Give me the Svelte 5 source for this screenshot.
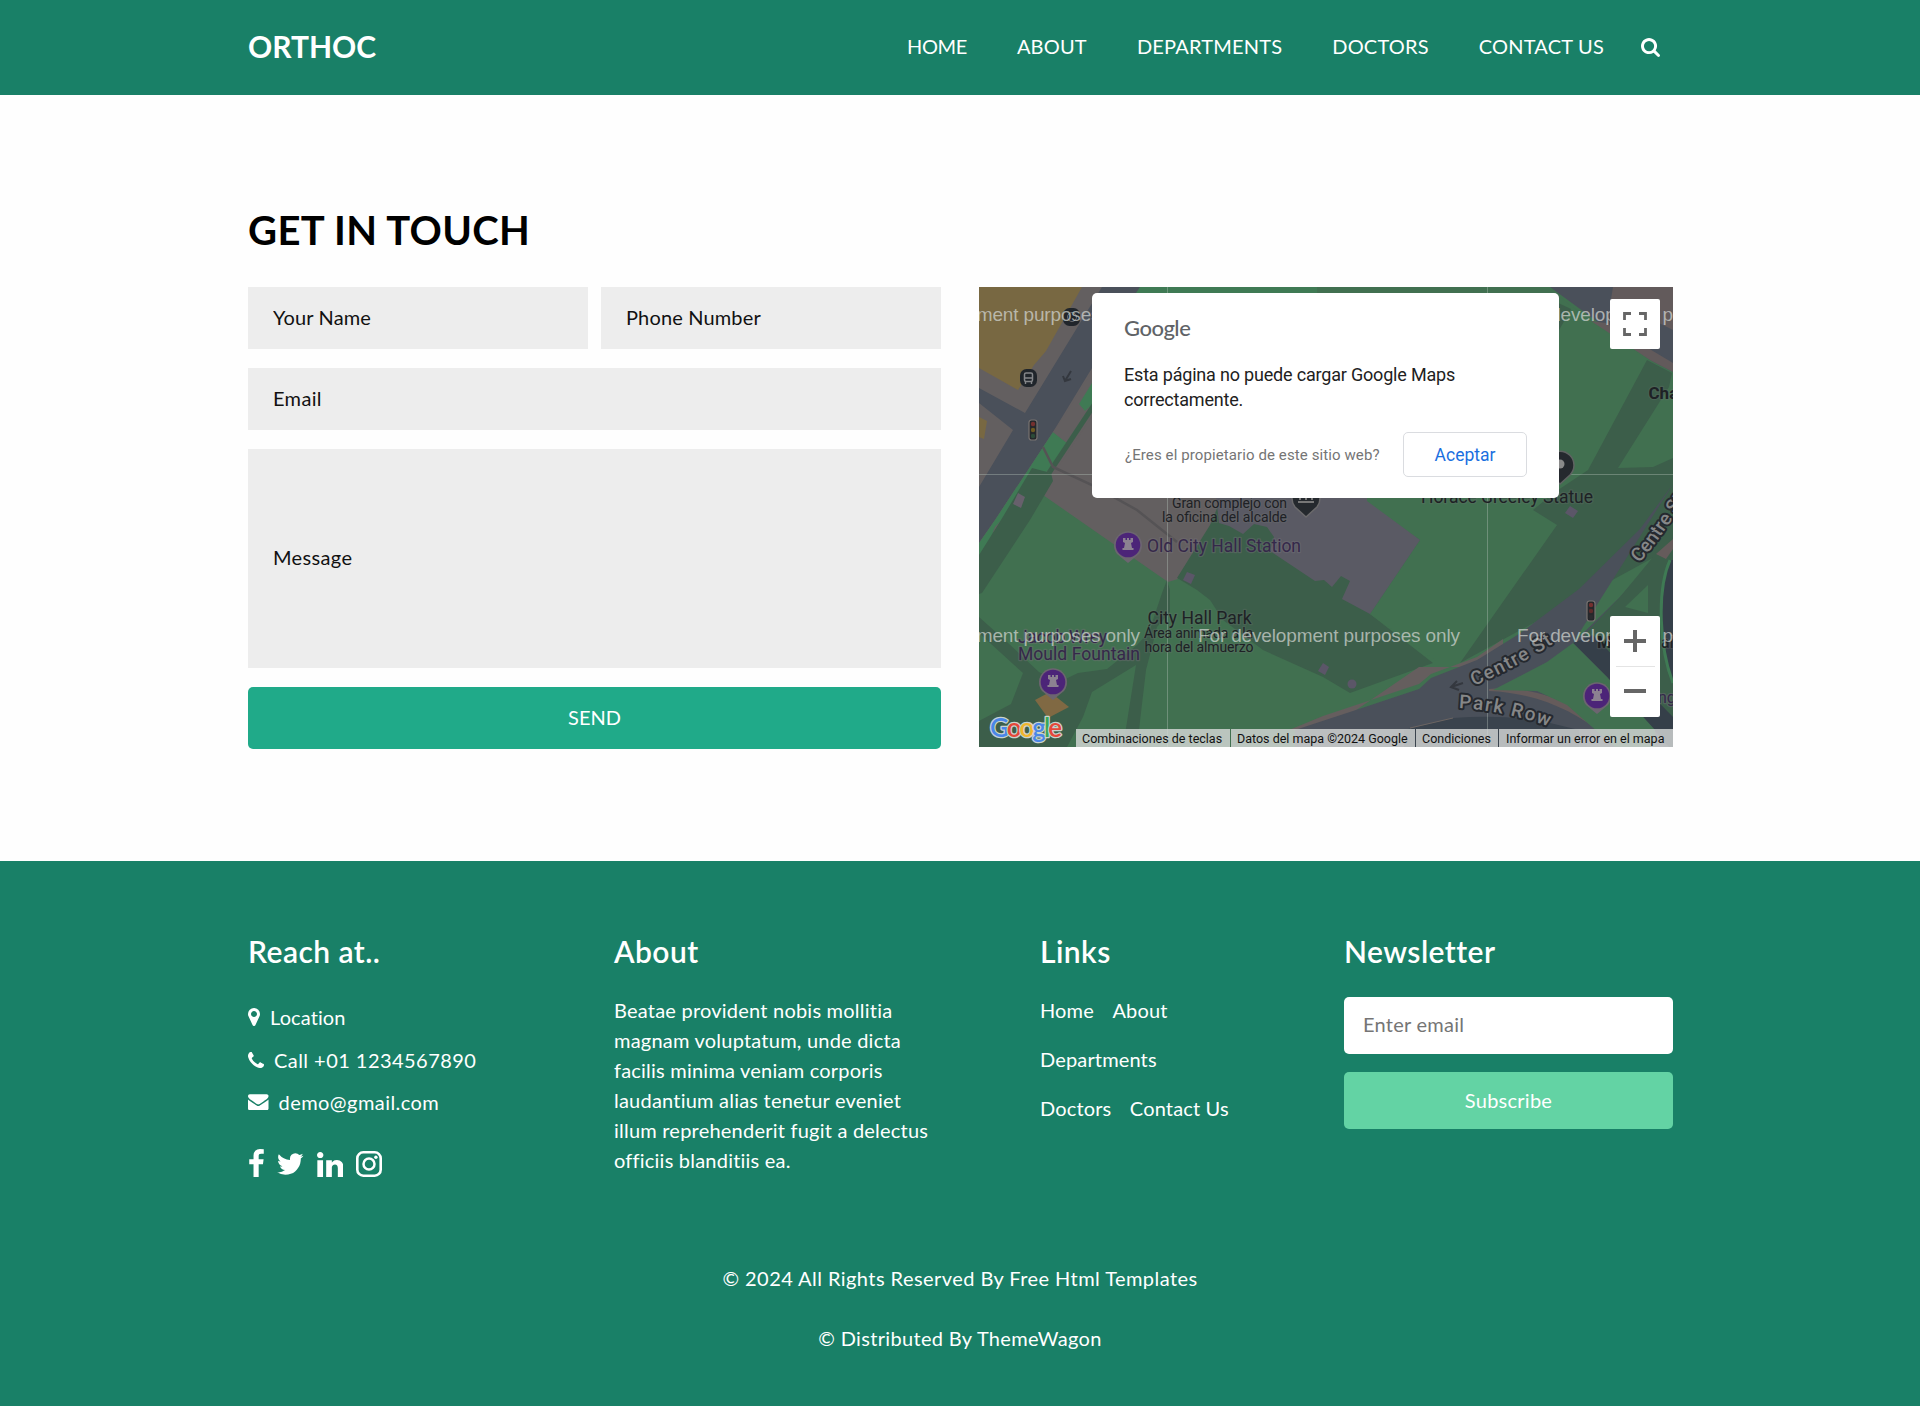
<script>
  const nav = ['HOME', 'ABOUT', 'DEPARTMENTS', 'DOCTORS', 'CONTACT US'];
  const linkRows = [['Home', 'About'], ['Departments'], ['Doctors', 'Contact Us']];

  // Landmark pins: position of the disc centre on the map
  const castles = [
    { x: 149, y: 258 },
    { x: 74, y: 395 },
    { x: 618, y: 409 }
  ];
  const watermarks = [-101, 219, 538].flatMap((x) => [{ x, y: 34 }, { x, y: 354.5 }]);
  const signals = [
    { x: 54, y: 143, mid: '#6d5a22', low: '#2c4a38' },
    { x: 612, y: 324, mid: '#5c2a2a', low: '#2b2b2f' }
  ];
</script>

<header class="top">
  <div class="container bar">
    <a class="brand" href="#top">ORTHOC</a>
    <nav>
      {#each nav as item}<a href="#top">{item}</a>{/each}
      <button class="search" aria-label="Search">
        <svg viewBox="64 128 1664 1664"><path d="M1216 832q0-185-131.500-316.500t-316.500-131.500-316.500 131.500-131.500 316.500 131.500 316.500 316.500 131.500 316.500-131.500 131.500-316.500zm512 832q0 52-38 90t-90 38q-54 0-90-38l-343-342q-179 124-399 124-143 0-273.500-55.500t-225-150-150-225-55.500-273.500 55.500-273.500 150-225 225-150 273.500-55.500 273.500 55.500 225 150 150 225 55.500 273.500q0 220-124 399l343 343q37 37 37 90z"/></svg>
      </button>
    </nav>
  </div>
</header>

<main class="container contact">
  <h2>GET IN TOUCH</h2>
  <div class="columns">
    <form>
      <div class="pair">
        <input type="text" placeholder="Your Name" />
        <input type="text" placeholder="Phone Number" />
      </div>
      <input class="email" type="email" placeholder="Email" />
      <input class="message" type="text" placeholder="Message" />
      <button type="button">SEND</button>
    </form>

    <div class="map">
      <svg class="canvas" viewBox="0 0 694 460">
        <rect width="694" height="460" fill="#417050" />

        <!-- streets and blocks, upper left -->
        <path fill="#635f60" d="M0 0H160L119 120L64 208L0 256Z" />
        <path fill="#786842" d="M0 0H103L67 64L55 78L39 103L0 81Z" />
        <path fill="#786842" d="M0 130L8 134L5 152L0 150Z" />
        <path fill="#4a505a" d="M123 0H161L150 20L113 81L74 145L16 233L0 256V200L34 143L0 116V101L46 126Z" />
        <path fill="#4a505a" d="M150 0H694V90L571 0H338V6H161V0Z" />
        <path fill="#3f7a54" d="M161 0H338V6H157Z" />
        <path fill="#3f7a54" d="M74 145L88 156L72 180L16 240L0 280V256L16 233Z" />
        <path fill="#635f60" d="M113 84L85 130L74 145L88 156L125 98L300 100L234 240L199 292L189 295L64 208L74 188L119 120Z" />
        <path fill="#3f7a54" d="M113 96L100 117L106 124L119 112Z" />
        <path fill="#3c5e4a" d="M53 181L72 186L74 194L51 233L3 306L0 307V268L22 233Z" />
        <path fill="#67606c" d="M39 206L46 210L42 221L34 217Z" />
        <path fill="none" stroke="#3c5e4a" stroke-width="5" d="M70 186L119 112" />
        <path fill="none" stroke="#555355" stroke-width="2.500" d="M64 160L74 180L113 198L158 223L198 255" />

        <!-- park walks and city hall -->
        <path fill="#3c5e4a" d="M198 291L231 238L245 205H390V216L441 253L391 327L454 376L371 406L344 390L284 363L244 333L231 313L218 303Z" />
        <path fill="#417050" d="M388 205H500V376H460L391 327L441 253L388 216Z" />
        <path fill="#5a5a64" d="M236 200L240 236L250 239L264 247L275 237L288 240L295 250L291 264L336 294L345 293L353 300L362 289L371 294L363 312L391 327L441 253L388 214V200Z" />
        <g fill="#5b5668">
          <path d="M208 285L216 288L212 297L204 293Z" />
          <path d="M344 376L350 380L346 388L339 384Z" />
          <circle cx="373" cy="397" r="4.500" />
        </g>

        <!-- south-west walks -->
        <path fill="#3c5e4a" d="M0 330L28 355L60 385L80 395L99 386L128 382L158 358L170 345L183 306L188 293L191 303V325L178 340L167 383L158 460H144L157 378L113 405L104 430L88 460H0V434L32 417L44 386L0 346Z" />
        <path fill="#806943" d="M56 413L71 405L90 420L69 431Z" />

        <!-- north-east -->
        <path fill="#417050" d="M494 0H571L581 10L614 36L671 73L694 85V250H560V205H500Z" />
        <path fill="#3c5e4a" d="M575 14L592 22L575 52Z" />
        <path fill="#625a5b" d="M612 34L627 36L694 76V85L671 73Z" />
        <path fill="#625a5b" d="M634 0H694V43L632 12Z" />
        <path fill="#3c5e4a" d="M668 73L693 86L690 100L639 181L674 180L694 171V260L481 376L578 238L554 223L576 205L609 183Z" />

        <!-- centre street -->
        <path fill="#655e5e" d="M310 443L344 429L440 397L452 387L498 370L524 352V380H440L345 445Z" />
        <path fill="#4a505a" d="M694 197L661 242L600 302L540 347L498 373L452 391L440 402L380 422L316 443V460H694V250L641 310L594 356Z" />
        <path fill="#3c5e4a" d="M694 250L674 270L641 310L606 347L630 390L694 450Z" />
        <path fill="#655b5b" d="M694 252L677 267L687 272L694 262Z" />
        <path fill="#417050" d="M669 298L646 320L669 326Z" />
        <path fill="#353f49" d="M691 273C677 305 681 363 694 394V273ZM594 356L614 348L694 430V460H690L628 390Z" />
        <path fill="none" stroke="#3f7a54" stroke-width="3" d="M691 273C677 305 681 363 694 396" />
        <path fill="#655b5b" d="M510 402C560 397 607 423 632 444L622 446C598 426 560 406 510 404Z" />
        <path fill="#417050" d="M594 356L628 390L676 443V460H636L588 418L558 404L514 403L568 375Z" />
        <path fill="#3a434d" d="M425 443L474 431Q528 427 571 436L600 443V460H425Z" />
        <path fill="none" stroke="#6b6461" d="M431 441L474 431" />
        <path fill="#5b5668" d="M591 219L599 224L594 231L586 226Z" />

        <!-- direction arrows -->
        <g fill="none" stroke="#34383f" stroke-width="2">
          <path d="M92 84L86 94M84 89L86 94L92 92" />
          <path d="M484 396L472 400M478 394L472 400L480 403" />
        </g>

        <!-- tile seams -->
        <path stroke="#b9c6bd" stroke-opacity=".38" d="M0 187.500H694M188.500 0V460M508.500 0V460" />

        {#each signals as s}
          <rect x={s.x - 4} y={s.y - 10} width="8" height="20" rx="2.500" fill="#25272b" stroke="#777270" stroke-width="1.200" />
          <circle cx={s.x} cy={s.y - 6} r="2.200" fill="#74302f" />
          <circle cx={s.x} cy={s.y} r="2.200" fill={s.mid} />
          <circle cx={s.x} cy={s.y + 6} r="2.200" fill={s.low} />
        {/each}

        <!-- transit stops -->
        <g>
          <rect x="41" y="82" width="17" height="18" rx="6.500" fill="#20252b" />
          <rect x="45.500" y="86" width="8" height="8.500" rx="1.500" fill="none" stroke="#85878a" stroke-width="1.500" />
          <path stroke="#85878a" stroke-width="1.400" d="M45 91H54M46.500 97V95M52.500 97V95" />
          <rect x="84" y="21" width="17" height="18" rx="6.500" fill="#20252b" />
          <circle cx="93" cy="30" r="4.500" fill="none" stroke="#6b6d70" />
        </g>

        <!-- civic pins -->
        <path fill="#25292e" stroke="#6b6a6c" stroke-width="1.500" d="M327 230L316 220A14 14 0 1 1 338 220Z" />
        <path fill="none" stroke="#777" stroke-width="2" d="M319 215H335M321 213V205M327 213V205M333 213V205" />
        <path fill="#25292e" stroke="#5f6362" stroke-width="1.500" d="M581 197L571 188A14 14 0 1 1 591 188Z" />
        <circle cx="581" cy="177" r="4.500" fill="#8a8a8a" />

        {#each castles as c}
          <path fill="#6c6570" d="M{c.x} {c.y + 18}L{c.x - 11} {c.y + 9}A14 14 0 1 1 {c.x + 11} {c.y + 9}Z" />
          <circle cx={c.x} cy={c.y} r="12.300" fill="#4c2478" />
          <path fill="#8c8191" d="M{c.x - 5} {c.y - 7}h2.500v2h1.500v-2h2v2h1.500v-2h2.500v4l-2 1l1 5h1.500v2h-11v-2h1.500l1-5l-2-1Z" />
        {/each}

        <g class="label dark">
          <text x="193" y="220.500" font-size="14" textLength="115">Gran complejo con</text>
          <text x="183" y="234.500" font-size="14" textLength="125">la oficina del alcalde</text>
          <text x="168.500" y="336.500" font-size="17.500" textLength="104">City Hall Park</text>
          <text x="165" y="351" font-size="14" textLength="109">Área animada a la</text>
          <text x="165.500" y="365" font-size="14" textLength="109">hora del almuerzo</text>
          <text x="442" y="215.500" font-size="17.500" textLength="172">Horace Greeley Statue</text>
          <text x="669.500" y="112" font-size="17" font-weight="700">Cha</text>
          <text x="618" y="361" font-size="16" font-weight="700">M</text>
          <text x="682" y="361" font-size="16">al</text>
        </g>
        <g class="label violet">
          <text x="168" y="265" font-size="17.500" textLength="154">Old City Hall Station</text>
          <text x="39" y="356" font-size="17.500" textLength="89">Jacob Wrey</text>
          <text x="39" y="373" font-size="17.500" textLength="122">Mould Fountain</text>
          <text x="679" y="416" font-size="16">ng</text>
        </g>

        <defs>
          <path id="row" d="M480 421Q525 423 580 443" />
          <path id="centre" d="M495 399Q545 377 590 346" />
          <path id="north" d="M660 276Q678 258 715 198" />
        </defs>
        <g class="label street">
          <text><textPath href="#centre" textLength="90">Centre St</textPath></text>
          <text><textPath href="#row" textLength="92">Park Row</textPath></text>
          <text><textPath href="#north">Centre St</textPath></text>
        </g>

        {#each watermarks as w}
          <text class="watermark" x={w.x} y={w.y} textLength="262">For development purposes only</text>
        {/each}

        <text class="logo" x="11" y="450" textLength="72"><tspan fill="#4a86e8">G</tspan><tspan fill="#e5483a">o</tspan><tspan fill="#f0b52c">o</tspan><tspan fill="#4a86e8">g</tspan><tspan fill="#3aa757">l</tspan><tspan fill="#e5483a">e</tspan></text>
      </svg>

      <button class="control fullscreen" aria-label="Fullscreen">
        <svg viewBox="0 0 24 24"><path d="M1.500 8V1.500H8M16 1.500H22.500V8M22.500 16V22.500H16M8 22.500H1.500V16" /></svg>
      </button>

      <div class="control zoom">
        <button aria-label="Zoom in"><svg viewBox="0 0 24 24"><path d="M12 1V23M1 12H23" /></svg></button>
        <button aria-label="Zoom out"><svg viewBox="0 0 24 24"><path d="M1 12H23" /></svg></button>
      </div>

      <div class="terms">
        <span class="keys">Combinaciones de teclas</span>
        <span class="data">Datos del mapa ©2024 Google</span>
        <span class="cond">Condiciones</span>
        <span class="report">Informar un error en el mapa</span>
      </div>

      <div class="dialog">
        <div class="mark">Google</div>
        <p>Esta página no puede cargar Google Maps correctamente.</p>
        <div class="actions">
          <span>¿Eres el propietario de este sitio web?</span>
          <button>Aceptar</button>
        </div>
      </div>
    </div>
  </div>
</main>

<footer>
  <div class="container info">
    <section>
      <h4>Reach at..</h4>
      <ul class="reach">
        <li><svg width="12" height="18" viewBox="384 128 1024 1536"><path d="M1152 640q0-106-75-181t-181-75-181 75-75 181 75 181 181 75 181-75 75-181zm256 0q0 109-33 179l-364 774q-16 33-47.500 52t-67.500 19-67.500-19-46.500-52l-365-774q-33-70-33-179 0-212 150-362t362-150 362 150 150 362z"/></svg><span>Location</span></li>
        <li><svg width="16" height="16" viewBox="192 128 1408 1408"><path d="M1600 1240q0 27-10 70.500t-21 68.500q-21 50-122 106-94 51-186 51-27 0-53-3.500t-57.500-12.500-47-14.500-55.500-20.500-49-18q-98-35-175-83-127-79-264-216t-216-264q-48-77-83-175-3-9-18-49t-20.500-55.500-14.500-47-12.500-57.500-3.500-53q0-92 51-186 56-101 106-122 25-11 68.500-21t70.500-10q14 0 21 3 18 6 53 76 11 19 30 54t35 63.500 31 53.500q3 4 17.500 25t21.500 35.500 7 28.500q0 20-28.500 50t-62 55-62 53-28.500 46q0 9 5 22.500t8.500 20.500 14 24 11.500 19q76 137 174 235t235 174q2 1 19 11.500t24 14 20.500 8.500 22.500 5q18 0 46-28.500t53-62 55-62 50-28.500q14 0 28.500 7t35.500 21.500 25 17.500q25 15 53.500 31t63.500 35 54 30q70 35 76 53 3 7 3 21z"/></svg><span class="phone">Call +01 1234567890</span></li>
        <li><svg width="20.500" height="16.500" viewBox="0 256 1792 1408"><path d="M1792 710v794q0 66-47 113t-113 47h-1472q-66 0-113-47t-47-113v-794q44 49 101 87 362 246 497 345 57 42 92.500 65.500t94.500 48 110 24.500h2q51 0 110-24.500t94.500-48 92.500-65.500q170-123 498-345 57-39 100-87zm0-294q0 79-49 151t-122 123q-376 261-468 325-10 7-42.500 31t-54 38.500-52 32.500-57.500 27-50 9h-2q-23 0-50-9t-57.500-27-52-32.500-54-38.500-42.500-31q-91-64-262-182.500t-205-142.500q-62-42-117-115.500t-55-136.500q0-78 41.500-130t118.500-52h1472q65 0 112.500 47t47.500 113z"/></svg><span class="mail">demo@gmail.com</span></li>
      </ul>
      <div class="social">
        <svg width="15" height="28" viewBox="479 0 864 1664"><path d="M1343 12v264h-157q-86 0-116 36t-30 108v189h293l-39 296h-254v759h-306v-759h-255v-296h255v-218q0-186 104-288.500t277-102.500q147 0 228 12z"/></svg>
        <svg class="bird" width="26.500" height="22" viewBox="108 256 1576 1280"><path d="M1684 408q-67 98-162 167 1 14 1 42 0 130-38 259.500t-115.500 248.500-184.500 210.500-258 146-323 54.500q-271 0-496-145 35 4 78 4 225 0 401-138-105-2-188-64.500t-114-159.500q33 5 61 5 43 0 85-11-112-23-185.500-111.500t-73.500-205.500v-4q68 38 146 41-66-44-105-115t-39-154q0-88 44-163 121 149 294.500 238.500t371.500 99.500q-8-38-8-74 0-134 94.500-228.500t228.500-94.500q140 0 236 102 109-21 205-78-37 115-142 178 93-10 186-50z"/></svg>
        <svg width="26.500" height="25.500" viewBox="127 148 1537 1468"><path d="M477 625v991h-330v-991h330zm21-306q1 73-50.500 122t-135.500 49h-2q-82 0-132-49t-50-122q0-74 51.500-122.500t134.500-48.500 133 48.500 51 122.500zm1166 729v568h-329v-530q0-105-40.500-164.500t-126.500-59.500q-63 0-105.500 34.500t-63.500 85.500q-11 30-11 81v553h-329q2-399 2-647t-1-296l-1-48h329v144h-2q20-32 41-56t56.500-52 87-43.500 114.500-15.500q171 0 275 113.500t104 332.500z"/></svg>
        <svg width="26" height="26" viewBox="0 0 26 26"><rect x="1.300" y="1.300" width="23.400" height="23.400" rx="6" fill="none" stroke="#fff" stroke-width="2.600"/><circle cx="13" cy="13" r="5.500" fill="none" stroke="#fff" stroke-width="2.500"/><circle cx="19.900" cy="6.200" r="1.700"/></svg>
      </div>
    </section>

    <section>
      <h4>About</h4>
      <p class="about">Beatae provident nobis mollitia magnam voluptatum, unde dicta facilis minima veniam corporis laudantium alias tenetur eveniet illum reprehenderit fugit a delectus officiis blanditiis ea.</p>
    </section>

    <section>
      <h4>Links</h4>
      <div class="links">
        {#each linkRows as row}
          <div>{#each row as link}<a href="#top">{link}</a>{/each}</div>
        {/each}
      </div>
    </section>

    <section>
      <h4>Newsletter</h4>
      <div class="newsletter">
        <input type="email" placeholder="Enter email" />
        <button>Subscribe</button>
      </div>
    </section>
  </div>

  <div class="legal">
    <p class="rights">© 2024 All Rights Reserved By Free Html Templates</p>
    <p class="dist">© Distributed By ThemeWagon</p>
  </div>
</footer>

<style>
  :global(body) {
    margin: 0;
    background: #fefefe;
    font-family: Lato, 'Open Sans', sans-serif;
    font-size: 20px;
    line-height: 30px;
  }
  h2, h4, p, ul { margin: 0; padding: 0; }
  a { color: inherit; text-decoration: none; }
  input, button { box-sizing: border-box; margin: 0; border: 0; font: inherit; }
  .container { width: 1425px; margin: 0 auto; padding-left: 1px; box-sizing: content-box; }

  .top { height: 95px; background: #198067; color: #fff; }
  .bar { display: flex; align-items: center; justify-content: space-between; height: 92px; }
  .brand { font-size: 30px; font-weight: 700; line-height: 36px; }
  nav { display: flex; align-items: center; gap: 50px; padding-right: 13px; }
  nav a { margin-top: -1px; letter-spacing: .2px; }
  nav a:first-child { letter-spacing: -.4px; }
  .search { display: flex; margin: 2px 0 0 -13px; padding: 0; background: none; }
  .search svg { width: 19px; height: 19px; fill: #fff; }

  .contact { height: 655px; padding-top: 111px; }
  h2 { margin-bottom: 33px; font-size: 40px; font-weight: 700; line-height: 48px; letter-spacing: .35px; color: #000; }
  .columns { display: grid; grid-template-columns: 693px 694px; gap: 38px; }
  form { display: flex; flex-direction: column; gap: 19px; }
  .pair { display: grid; grid-template-columns: 1fr 1fr; gap: 13px; }
  form input { width: 100%; height: 62px; padding: 0 25px 2px; background: #ededed; border-radius: 0; letter-spacing: .15px; }
  form .email, form .message { letter-spacing: .35px; }
  form input::placeholder { color: #111; opacity: 1; }
  form .message { height: 219px; padding-bottom: 3px; }
  form button { height: 62px; padding-bottom: 3px; border-radius: 5px; background: #20aa89; color: #fff; }

  .map { position: relative; width: 694px; height: 460px; overflow: hidden; }
  .canvas { display: block; width: 694px; height: 460px; }
  .label { font-family: Roboto, sans-serif; paint-order: stroke; stroke-linejoin: round; stroke-width: 2.5px; }
  .dark { fill: #1e2125; stroke: #6f727040; font-weight: 400; }
  .violet { fill: #35284a; stroke: #77727a60; font-weight: 400; }
  .street { fill: #868788; stroke: #25292f; font-size: 19px; font-weight: 500; stroke-width: 4px; }
  .watermark { font-family: 'Liberation Sans', Arial, sans-serif; font-size: 19px; fill: #d3d6d3; fill-opacity: .72; }
  .logo { font-family: Lato, sans-serif; font-size: 26px; font-weight: 600; paint-order: stroke; stroke: #c9d3ce; stroke-width: 2.5px; stroke-linejoin: round; }

  .control { position: absolute; right: 13px; width: 50px; background: #fff; border-radius: 2px; }
  .control svg { width: 24px; height: 24px; fill: none; stroke: #666; }
  .fullscreen { top: 12px; display: grid; place-items: center; height: 50px; padding: 0; }
  .fullscreen svg { stroke-width: 2.8px; }
  .zoom { bottom: 30px; height: 101px; }
  .zoom button { display: grid; place-items: center; width: 50px; height: 50px; padding: 0; background: none; }
  .zoom svg { stroke-width: 4px; }
  .zoom button + button { position: relative; }
  .zoom button + button::before { content: ''; position: absolute; top: 0; left: 6px; right: 5px; height: 1px; background: #e4e4e4; }

  .terms { position: absolute; right: 0; bottom: 0; display: flex; gap: 1px; height: 18px; font: 12.500px/19px Roboto, sans-serif; color: #111; }
  .terms span { padding-left: 6px; background: #d8dbdacc; white-space: nowrap; box-sizing: border-box; }
  .terms .keys { width: 154px; }
  .terms .data { width: 184px; }
  .terms .cond { width: 82px; }
  .terms .report { width: 174px; padding-left: 7px; }

  .dialog { position: absolute; top: 6px; left: 113px; box-sizing: border-box; width: 467px; height: 205px; padding: 22px 32px 0; border-radius: 5px; background: #fff; font-family: Roboto, sans-serif; }
  .mark { font: 500 22px/26px Lato, sans-serif; color: #606367; letter-spacing: -.5px; }
  .dialog p { margin-top: 21px; font-size: 18px; line-height: 25px; letter-spacing: -.19px; color: #212121; }
  .actions { display: flex; align-items: center; justify-content: space-between; margin-top: 20px; }
  .actions span { padding-left: 1px; font-size: 15px; letter-spacing: .1px; color: #757575; white-space: nowrap; }
  .actions button { width: 124px; height: 45px; padding: 0; border: 1px solid #dadce0; border-radius: 5px; background: #fff; color: #1a6fe0; font-size: 17.500px; }

  footer { height: 545px; padding-top: 72px; box-sizing: border-box; background: #198067; color: #fff; }
  .info { display: grid; grid-template-columns: 366px 426px 304px 329px; height: 270px; }
  h4 { margin-bottom: 26px; font-size: 30px; font-weight: 600; line-height: 36px; letter-spacing: .45px; }
  .reach { display: flex; flex-direction: column; gap: 12.500px; padding-top: 7px; list-style: none; }
  .reach li { display: flex; align-items: center; gap: 10px; }
  .reach svg, .social svg { fill: #fff; }
  .reach span { letter-spacing: .1px; }
  .reach .phone { letter-spacing: .45px; }
  .reach .mail { letter-spacing: .45px; }
  .social { display: flex; align-items: flex-end; gap: 13px; margin: 32px 0 0 1px; }
  .bird { margin-bottom: 2px; }
  .about { width: 330px; letter-spacing: .22px; }
  .links { display: flex; flex-direction: column; gap: 19px; letter-spacing: .15px; }
  .links div { display: flex; gap: 18.500px; }
  .newsletter { display: flex; flex-direction: column; gap: 18px; padding-top: 2px; }
  .newsletter input { height: 57px; padding: 0 19px 3px; border-radius: 5px; background: #fff; letter-spacing: .25px; }
  .newsletter input::placeholder { color: #757575; opacity: 1; }
  .newsletter button { height: 57px; padding-bottom: 3px; border-radius: 5px; background: #63d3a4; color: #fff; letter-spacing: .25px; }
  .legal { display: flex; flex-direction: column; gap: 30px; padding-top: 60px; text-align: center; }
  .rights { letter-spacing: .44px; }
  .dist { letter-spacing: .34px; }
</style>
